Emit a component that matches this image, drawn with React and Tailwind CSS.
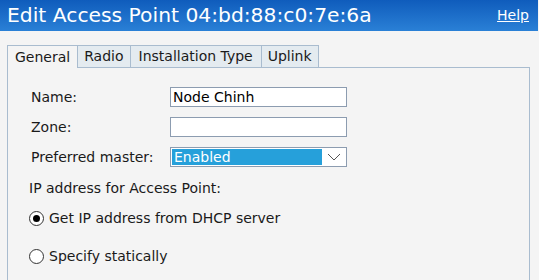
import React from "react";

const font = { fontFamily: '"DejaVu Sans", Verdana, sans-serif' };

const Radio = ({ checked, label }) => (
  <label className="flex items-center gap-[5px] h-[16px] text-[14px] text-[#1a1a1a]">
    <span className="w-[15px] h-[15px] rounded-full border border-[#333] bg-white flex items-center justify-center">
      {checked && <span className="w-[7px] h-[7px] rounded-full bg-black" />}
    </span>
    {label}
  </label>
);

const Row = ({ label, children }) => (
  <div className="flex items-center h-[20px]">
    <div className="w-[139px] text-[14px] text-[#1a1a1a]">{label}</div>
    {children}
  </div>
);

const App = () => {
  const tabs = ["General", "Radio", "Installation Type", "Uplink"];

  return (
    <div className="w-[539px] h-[280px] bg-[#f4f4f4] overflow-hidden" style={font}>
      {/* Title bar */}
      <div className="h-[31px] bg-gradient-to-b from-[#0f5cbc] to-[#2a80d6] flex items-center justify-between pl-[7px] pr-[9px] mr-[1px]">
        <span className="text-white text-[20.3px] leading-none">Edit Access Point 04:bd:88:c0:7e:6a</span>
        <a href="#" className="text-white text-[14px] underline">Help</a>
      </div>

      <div className="pt-[14px] pl-[7px] pr-[9px]">
        {/* Tabs */}
        <div className="flex h-[23px]">
          {tabs.map((t, i) =>
            i === 0 ? (
              <div
                key={t}
                className="px-[7px] flex items-center text-[14px] text-[#1a1a1a] bg-[#f4f4f4] border border-b-0 border-[#a9bccf]"
              >
                {t}
              </div>
            ) : (
              <div
                key={t}
                className={
                  (i === 2 ? "px-[8px] " : "px-[6px] ") +
                  "flex items-center text-[14px] text-[#1a1a1a] bg-[#e4ebf0] border border-l-0 border-[#a9bccf]"
                }
              >
                {t}
              </div>
            )
          )}
          <div className="flex-1 border-b border-[#a9bccf]" />
        </div>

        {/* Panel */}
        <div className="h-[300px] border-l border-r border-[#a9bccf] pl-[23px] pt-[19px]">
          <div className="flex flex-col gap-[10px]">
            <Row label="Name:">
              <div className="w-[177px] h-[20px] bg-white border border-[#8c9cb0] px-[2px] text-[14px] leading-[18px] text-black">
                Node Chinh
              </div>
            </Row>
            <Row label="Zone:">
              <div className="w-[177px] h-[20px] bg-white border border-[#8c9cb0]" />
            </Row>
            <Row label="Preferred master:">
              <div className="w-[177px] h-[20px] bg-white border border-[#8c9cb0] flex items-center p-[1px]">
                <div className="w-[150px] h-full bg-[#26a0da] text-white text-[14px] leading-[16px] px-[2px]">
                  Enabled
                </div>
                <div className="flex-1 flex items-center justify-center">
                  <svg width="14" height="8" viewBox="0 0 14 8">
                    <path d="M1 1 L7 7 L13 1" fill="none" stroke="#555" strokeWidth="1" />
                  </svg>
                </div>
              </div>
            </Row>
          </div>

          <div className="mt-[13px] -ml-[2px] h-[17px] leading-[17px] text-[14px] text-[#1a1a1a]">IP address for Access Point:</div>
          <div className="-ml-[2px] mt-[13px] flex flex-col gap-[22px]">
            <Radio checked label="Get IP address from DHCP server" />
            <Radio label="Specify statically" />
          </div>
        </div>
      </div>
    </div>
  );
};

export default App;
